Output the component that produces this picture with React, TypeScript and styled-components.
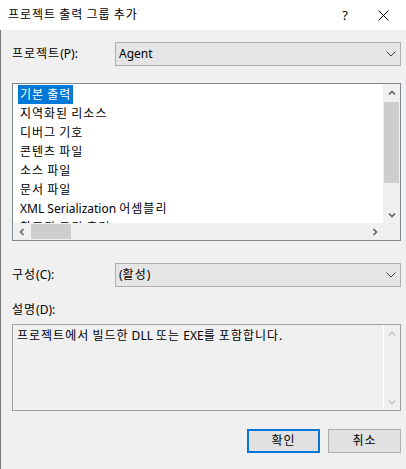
import styled, { createGlobalStyle } from "styled-components";
import { Fragment } from "react";

const GlobalStyle = createGlobalStyle`
  html, body {
    margin: 0;
    padding: 0;
    background: #f0f0f0;
  }
  body {
    font-family: "Noto Sans", "Noto Sans CJK KR", sans-serif;
    font-size: 12px;
    color: #000;
  }
`;

// hangul in the original font sits wider than Noto CJK at the same size
const Hangul = styled.span`
  letter-spacing: 1px;
`;

const K = ({ children }: { children: string }) => {
  const parts = children.split(/([\uAC00-\uD7A3]+)/);
  return (
    <>
      {parts.map((p, i) =>
        /[\uAC00-\uD7A3]/.test(p) ? (
          <Hangul key={i}>{p}</Hangul>
        ) : (
          <Fragment key={i}>{p}</Fragment>
        )
      )}
    </>
  );
};

const Window = styled.div`
  width: 406px;
  height: 469px;
  display: flex;
  flex-direction: column;
  background: #f0f0f0;
  overflow: hidden;
`;

const TitleBar = styled.div`
  height: 30px;
  flex: none;
  background: #fff;
  display: flex;
  align-items: center;
  padding-left: 8px;
`;

const Title = styled.div`
  flex: 1;
  font-size: 12px;
  line-height: 16px;
`;

const TitleButton = styled.div<{ $w: number }>`
  width: ${({ $w }) => $w}px;
  height: 30px;
  display: flex;
  align-items: center;
  justify-content: center;
  font-size: 13px;
`;

const Body = styled.div`
  flex: 1;
  display: flex;
  flex-direction: column;
  padding: 12px 5px 0 11px;
  border-left: 1px solid #7a7a7a;
`;

const FieldRow = styled.div<{ $mt?: number }>`
  display: flex;
  align-items: center;
  height: 24px;
  margin-top: ${({ $mt }) => $mt ?? 0}px;
`;

const Label = styled.div`
  width: 103px;
  flex: none;
  line-height: 16px;
`;

const Combo = styled.div`
  flex: 1;
  height: 24px;
  box-sizing: border-box;
  border: 1px solid #adadad;
  background: #e5e5e5;
  display: flex;
  align-items: center;
  padding: 0 4px 0 3px;
  line-height: 16px;
`;

const ComboText = styled.span`
  flex: 1;
`;

const ListBox = styled.div`
  margin-top: 17px;
  height: 158px;
  box-sizing: border-box;
  border: 1px solid #828790;
  background: #fff;
  display: grid;
  grid-template-columns: 1fr 17px;
  grid-template-rows: 1fr 17px;
`;

const Items = styled.div`
  overflow: hidden;
  padding: 1px 0 0 5px;
`;

const Item = styled.div`
  height: 19px;
  line-height: 19px;
  white-space: nowrap;
  display: flex;
`;

const ItemText = styled.span<{ $selected?: boolean }>`
  padding: 0 2px;
  background: ${({ $selected }) => ($selected ? "#0078d7" : "transparent")};
  color: ${({ $selected }) => ($selected ? "#fff" : "#000")};
`;

const VScroll = styled.div<{ $disabled?: boolean }>`
  background: #f0f0f0;
  display: flex;
  flex-direction: column;
  border-left: ${({ $disabled }) => ($disabled ? "1px solid #fff" : "none")};
`;

const ArrowBox = styled.div`
  height: 17px;
  flex: none;
  display: flex;
  align-items: center;
  justify-content: center;
`;

const Track = styled.div`
  flex: 1;
  display: flex;
  flex-direction: column;
  padding: 1px;
`;

const VThumb = styled.div`
  height: 81px;
  background: #cdcdcd;
`;

const HScroll = styled.div`
  background: #f0f0f0;
  display: flex;
  align-items: stretch;
`;

const HArrowBox = styled.div`
  width: 17px;
  flex: none;
  display: flex;
  align-items: center;
  justify-content: center;
`;

const HTrack = styled.div`
  flex: 1;
  display: flex;
  padding: 1px;
`;

const HThumb = styled.div`
  width: 40px;
  background: #cdcdcd;
`;

const Corner = styled.div`
  background: #f0f0f0;
`;

const SectionLabel = styled.div`
  margin-top: 15px;
  height: 16px;
  line-height: 16px;
`;

const DescBox = styled.div`
  margin-top: 6px;
  height: 87px;
  box-sizing: border-box;
  border: 1px solid #a0a0a0;
  background: #f0f0f0;
  display: grid;
  grid-template-columns: 1fr 17px;
`;

const DescText = styled.div`
  padding: 3px 0 0 4px;
  line-height: 16px;
`;

const DescScroll = styled(VScroll)`
  justify-content: space-between;
`;

const Buttons = styled.div`
  margin-top: 18px;
  display: flex;
  justify-content: flex-end;
  gap: 8px;
`;

const Button = styled.div<{ $default?: boolean }>`
  width: 73px;
  height: 24px;
  box-sizing: border-box;
  border: ${({ $default }) =>
    $default ? "2px solid #0078d7" : "1px solid #adadad"};
  background: #e1e1e1;
  display: flex;
  align-items: center;
  justify-content: center;
  line-height: 16px;
`;

const Chevron = ({
  dir,
  color = "#606060",
}: {
  dir: "up" | "down" | "left" | "right";
  color?: string;
}) => {
  const paths = {
    up: "M1 5.5 L4 2.5 L7 5.5",
    down: "M1 2.5 L4 5.5 L7 2.5",
    left: "M5.5 1 L2.5 4 L5.5 7",
    right: "M2.5 1 L5.5 4 L2.5 7",
  };
  return (
    <svg width={8} height={8} viewBox="0 0 8 8">
      <path d={paths[dir]} fill="none" stroke={color} strokeWidth={1.6} />
    </svg>
  );
};

const ComboArrow = () => (
  <svg width="10" height="6" viewBox="0 0 10 6">
    <path d="M0.5 0.5 L5 5 L9.5 0.5" fill="none" stroke="#404040" strokeWidth={1} />
  </svg>
);

const CloseIcon = () => (
  <svg width="11" height="11" viewBox="0 0 11 11">
    <path d="M0.5 0.5 L10.5 10.5 M10.5 0.5 L0.5 10.5" stroke="#000" strokeWidth={1} />
  </svg>
);

const items = [
  "기본 출력",
  "지역화된 리소스",
  "디버그 기호",
  "콘텐츠 파일",
  "소스 파일",
  "문서 파일",
  "XML Serialization 어셈블리",
  "참조된 로컬 출력",
];

const App = () => (
  <>
    <GlobalStyle />
    <Window>
      <TitleBar>
        <Title>
          <K>프로젝트 출력 그룹 추가</K>
        </Title>
        <TitleButton $w={30}>?</TitleButton>
        <TitleButton $w={46}>
          <CloseIcon />
        </TitleButton>
      </TitleBar>
      <Body>
        <FieldRow>
          <Label>
            <K>프로젝트(P):</K>
          </Label>
          <Combo>
            <ComboText>Agent</ComboText>
            <ComboArrow />
          </Combo>
        </FieldRow>
        <ListBox>
          <Items>
            {items.map((it, i) => (
              <Item key={it}>
                <ItemText $selected={i === 0}>
                  <K>{it}</K>
                </ItemText>
              </Item>
            ))}
          </Items>
          <VScroll>
            <ArrowBox>
              <Chevron dir="up" />
            </ArrowBox>
            <Track>
              <VThumb />
            </Track>
            <ArrowBox>
              <Chevron dir="down" />
            </ArrowBox>
          </VScroll>
          <HScroll>
            <HArrowBox>
              <Chevron dir="left" />
            </HArrowBox>
            <HTrack>
              <HThumb />
            </HTrack>
            <HArrowBox>
              <Chevron dir="right" />
            </HArrowBox>
          </HScroll>
          <Corner />
        </ListBox>
        <FieldRow $mt={22}>
          <Label>
            <K>구성(C):</K>
          </Label>
          <Combo>
            <ComboText>
              <K>(활성)</K>
            </ComboText>
            <ComboArrow />
          </Combo>
        </FieldRow>
        <SectionLabel>
          <K>설명(D):</K>
        </SectionLabel>
        <DescBox>
          <DescText>
            <K>프로젝트에서 빌드한 DLL 또는 EXE를 포함합니다.</K>
          </DescText>
          <DescScroll $disabled>
            <ArrowBox>
              <Chevron dir="up" color="#c0c0c0" />
            </ArrowBox>
            <ArrowBox>
              <Chevron dir="down" color="#c0c0c0" />
            </ArrowBox>
          </DescScroll>
        </DescBox>
        <Buttons>
          <Button $default>
            <K>확인</K>
          </Button>
          <Button>
            <K>취소</K>
          </Button>
        </Buttons>
      </Body>
    </Window>
  </>
);

export default App;
